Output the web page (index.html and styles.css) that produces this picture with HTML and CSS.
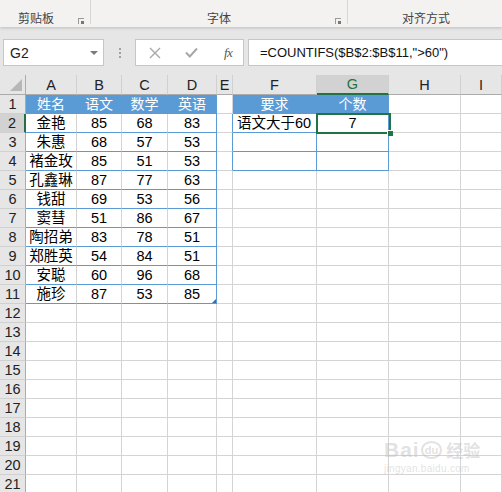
FILE: index.html
```html
<!DOCTYPE html>
<html lang="zh-CN">
<head>
<meta charset="utf-8">
<title>COUNTIFS</title>
<link rel="stylesheet" href="styles.css">
</head>
<body>
<div class="ribbon">
  <div class="grp g1"><span class="lbl">剪贴板</span><i class="launch"></i></div>
  <div class="grp g2"><span class="lbl">字体</span><i class="launch"></i></div>
  <div class="grp g3"><span class="lbl">对齐方式</span></div>
</div>
<div class="fbar">
  <div class="namebox"><span>G2</span>
    <svg class="caret" width="8" height="4" viewBox="0 0 8 4"><path d="M0 0H8L4 4Z" fill="#7a7a7a"/></svg>
  </div>
  <div class="dots"><i></i><i></i><i></i></div>
  <div class="btns">
    <svg width="12" height="12" viewBox="0 0 12 12"><path d="M1 1L11 11M11 1L1 11" stroke="#a8a8a8" stroke-width="1.4"/></svg>
    <svg width="13" height="11" viewBox="0 0 13 11"><path d="M1 5.5L4.8 9.5L12 1.5" fill="none" stroke="#a8a8a8" stroke-width="2"/></svg>
    <span class="fx">fx</span>
  </div>
  <div class="formula">=COUNTIFS($B$2:$B$11,"&gt;60")</div>
</div>
<div class="sheet">
  <div class="cell ch corner"><svg width="12" height="12" viewBox="0 0 12 12"><path d="M12 0V12H0Z" fill="#b7b7b7"/></svg></div>
  <div class="cell ch">A</div><div class="cell ch">B</div><div class="cell ch">C</div><div class="cell ch">D</div><div class="cell ch">E</div><div class="cell ch">F</div><div class="cell ch csel">G</div><div class="cell ch">H</div><div class="cell ch">I</div>

  <div class="cell rh">1</div><div class="cell hd">姓名</div><div class="cell hd">语文</div><div class="cell hd">数学</div><div class="cell hd">英语</div><div class="cell"></div><div class="cell hd">要求</div><div class="cell hd">个数</div><div class="cell"></div><div class="cell"></div>

  <div class="cell rh rsel">2</div><div class="cell t">金艳</div><div class="cell t">85</div><div class="cell t">68</div><div class="cell t br">83</div><div class="cell br"></div><div class="cell t br left">语文大于60</div><div class="cell t br">7</div><div class="cell"></div><div class="cell"></div>

  <div class="cell rh">3</div><div class="cell t">朱惠</div><div class="cell t">68</div><div class="cell t">57</div><div class="cell t br">53</div><div class="cell br"></div><div class="cell t br"></div><div class="cell t br"></div><div class="cell"></div><div class="cell"></div>

  <div class="cell rh">4</div><div class="cell t">褚金玫</div><div class="cell t">85</div><div class="cell t">51</div><div class="cell t br">53</div><div class="cell br"></div><div class="cell t br"></div><div class="cell t br"></div><div class="cell"></div><div class="cell"></div>

  <div class="cell rh">5</div><div class="cell t">孔鑫琳</div><div class="cell t">87</div><div class="cell t">77</div><div class="cell t br">63</div><div class="cell"></div><div class="cell"></div><div class="cell"></div><div class="cell"></div><div class="cell"></div>

  <div class="cell rh">6</div><div class="cell t">钱甜</div><div class="cell t">69</div><div class="cell t">53</div><div class="cell t br">56</div><div class="cell"></div><div class="cell"></div><div class="cell"></div><div class="cell"></div><div class="cell"></div>

  <div class="cell rh">7</div><div class="cell t">窦彗</div><div class="cell t">51</div><div class="cell t">86</div><div class="cell t br">67</div><div class="cell"></div><div class="cell"></div><div class="cell"></div><div class="cell"></div><div class="cell"></div>

  <div class="cell rh">8</div><div class="cell t">陶招弟</div><div class="cell t">83</div><div class="cell t">78</div><div class="cell t br">51</div><div class="cell"></div><div class="cell"></div><div class="cell"></div><div class="cell"></div><div class="cell"></div>

  <div class="cell rh">9</div><div class="cell t">郑胜英</div><div class="cell t">54</div><div class="cell t">84</div><div class="cell t br">51</div><div class="cell"></div><div class="cell"></div><div class="cell"></div><div class="cell"></div><div class="cell"></div>

  <div class="cell rh">10</div><div class="cell t">安聪</div><div class="cell t">60</div><div class="cell t">96</div><div class="cell t br">68</div><div class="cell"></div><div class="cell"></div><div class="cell"></div><div class="cell"></div><div class="cell"></div>

  <div class="cell rh">11</div><div class="cell t">施珍</div><div class="cell t">87</div><div class="cell t">53</div><div class="cell t br tend">85</div><div class="cell"></div><div class="cell"></div><div class="cell"></div><div class="cell"></div><div class="cell"></div>

  <div class="cell rh">12</div><div class="cell"></div><div class="cell"></div><div class="cell"></div><div class="cell"></div><div class="cell"></div><div class="cell"></div><div class="cell"></div><div class="cell"></div><div class="cell"></div>
  <div class="cell rh">13</div><div class="cell"></div><div class="cell"></div><div class="cell"></div><div class="cell"></div><div class="cell"></div><div class="cell"></div><div class="cell"></div><div class="cell"></div><div class="cell"></div>
  <div class="cell rh">14</div><div class="cell"></div><div class="cell"></div><div class="cell"></div><div class="cell"></div><div class="cell"></div><div class="cell"></div><div class="cell"></div><div class="cell"></div><div class="cell"></div>
  <div class="cell rh">15</div><div class="cell"></div><div class="cell"></div><div class="cell"></div><div class="cell"></div><div class="cell"></div><div class="cell"></div><div class="cell"></div><div class="cell"></div><div class="cell"></div>
  <div class="cell rh">16</div><div class="cell"></div><div class="cell"></div><div class="cell"></div><div class="cell"></div><div class="cell"></div><div class="cell"></div><div class="cell"></div><div class="cell"></div><div class="cell"></div>
  <div class="cell rh">17</div><div class="cell"></div><div class="cell"></div><div class="cell"></div><div class="cell"></div><div class="cell"></div><div class="cell"></div><div class="cell"></div><div class="cell"></div><div class="cell"></div>
  <div class="cell rh">18</div><div class="cell"></div><div class="cell"></div><div class="cell"></div><div class="cell"></div><div class="cell"></div><div class="cell"></div><div class="cell"></div><div class="cell"></div><div class="cell"></div>
  <div class="cell rh">19</div><div class="cell"></div><div class="cell"></div><div class="cell"></div><div class="cell"></div><div class="cell"></div><div class="cell"></div><div class="cell"></div><div class="cell"></div><div class="cell"></div>
  <div class="cell rh">20</div><div class="cell"></div><div class="cell"></div><div class="cell"></div><div class="cell"></div><div class="cell"></div><div class="cell"></div><div class="cell"></div><div class="cell"></div><div class="cell"></div>
  <div class="cell rh">21</div><div class="cell"></div><div class="cell"></div><div class="cell"></div><div class="cell"></div><div class="cell"></div><div class="cell"></div><div class="cell"></div><div class="cell"></div><div class="cell"></div>

  <div class="selbox"></div>
  <div class="watermark"><span class="wm-b">Bai</span><span class="wm-paw">du</span><span class="wm-j">经验</span><span class="wm-url">jingyan.baidu.com</span></div>
</div>
</body>
</html>
```

FILE: styles.css
```css
html, body {
  margin: 0;
  padding: 0;
  background: #e6e6e6;
  width: 502px;
  height: 492px;
  overflow: hidden;
}

.ribbon {
  height: 27px;
  background: #f3f2f1;
  display: flex;
  box-shadow: 0 1px 3px rgba(0, 0, 0, 0.18);
  position: relative;
  z-index: 1;
  font: 12px "Noto Sans CJK SC", "Liberation Sans", sans-serif;
  color: #444;
}
.grp {
  position: relative;
  box-sizing: border-box;
  height: 24px;
  display: flex;
  align-items: flex-end;
  align-self: flex-start;
}
.grp .lbl { line-height: 16px; margin-bottom: -2px; }
.g1 { width: 91px; padding-left: 18px; border-right: 1px solid #d6d6d6; }
.g2 { width: 257px; justify-content: center; border-right: 1px solid #d6d6d6; }
.g3 { flex: 1; padding-left: 54px; }
.launch {
  position: absolute;
  right: 6px;
  bottom: 0;
  width: 5px;
  height: 5px;
  border-left: 1px solid #9a9a9a;
  border-top: 1px solid #9a9a9a;
}
.launch::after {
  content: "";
  position: absolute;
  right: 0;
  bottom: 0;
  width: 3px;
  height: 3px;
  background: #777;
}

.fbar {
  height: 48px;
  box-sizing: border-box;
  padding-top: 12px;
  display: flex;
  align-items: flex-start;
  background: #e6e6e6;
}
.namebox {
  margin-left: 3px;
  width: 101px;
  height: 27px;
  box-sizing: border-box;
  background: #fff;
  border: 1px solid #c6c6c6;
  display: flex;
  align-items: center;
  justify-content: space-between;
  padding: 0 5px 0 6px;
  font: 14px "Liberation Sans", sans-serif;
  color: #222;
}
.caret { margin-top: 1px; }
.dots {
  width: 31px;
  height: 27px;
  display: flex;
  flex-direction: column;
  align-items: center;
  justify-content: center;
  gap: 2px;
}
.dots i {
  width: 2px;
  height: 2px;
  background: #a0a0a0;
}
.btns {
  width: 109px;
  height: 27px;
  box-sizing: border-box;
  background: #fff;
  border: 1px solid #c6c6c6;
  display: flex;
  align-items: center;
  padding-left: 13px;
  gap: 24px;
}
.fx {
  font: italic 13px "Liberation Serif", serif;
  color: #555;
  letter-spacing: -0.5px;
  margin-left: 2px;
}
.formula {
  margin-left: 4px;
  flex: 1;
  height: 27px;
  box-sizing: border-box;
  background: #fff;
  border: 1px solid #c6c6c6;
  border-right: 0;
  padding-left: 11px;
  font: 13px "Liberation Sans", sans-serif;
  color: #111;
  line-height: 25px;
  white-space: nowrap;
}

.sheet {
  position: relative;
  display: grid;
  grid-template-columns: 26px 51px 45px 46px 49px 16px 84px 72px 72px 41px;
  grid-template-rows: 20px;
  grid-auto-rows: 19px;
  height: 417px;
  overflow: hidden;
  background: #fff;
}
.cell {
  box-sizing: border-box;
  border-right: 1px solid #d4d4d4;
  border-bottom: 1px solid #d4d4d4;
  padding-top: 1px;
  display: flex;
  align-items: center;
  justify-content: center;
  font: 14.5px/17px "Liberation Sans", "Noto Sans CJK SC", sans-serif;
  color: #000;
  white-space: nowrap;
  position: relative;
}
.ch {
  background: #e6e6e6;
  border-bottom-color: #ababab;
  border-right-color: #d0d0d0;
  color: #222;
  padding-top: 1px;
}
.corner {
  align-items: flex-end;
  justify-content: flex-end;
  padding: 0 3px 3px 0;
  border-right-color: #ababab;
}
.csel {
  background: #d2d2d2;
  border-bottom: 2px solid #217346;
  color: #217346;
}
.rh {
  background: #e6e6e6;
  border-right-color: #ababab;
  border-bottom-color: #d0d0d0;
  color: #222;
}
.rsel {
  background: #d2d2d2;
  border-right: 2px solid #217346;
}
.hd {
  background: #5b9bd5;
  color: #fff;
  border-right-color: #5b9bd5;
  border-bottom-color: #5b9bd5;
  font-size: 14px;
}
.t { border-bottom-color: #5b9bd5; }
.br { border-right-color: #5b9bd5; }
.left { justify-content: flex-start; padding-left: 4px; }
.tend::after {
  content: "";
  position: absolute;
  right: 0;
  bottom: 0;
  width: 0;
  height: 0;
  border-left: 4px solid transparent;
  border-bottom: 4px solid #2f6eb5;
}

.selbox {
  position: absolute;
  left: 316px;
  top: 38px;
  width: 75px;
  height: 21px;
  box-sizing: border-box;
  border: 2px solid #217346;
  pointer-events: none;
}
.selbox::after {
  content: "";
  position: absolute;
  right: -4px;
  bottom: -4px;
  width: 5px;
  height: 5px;
  background: #217346;
  border: 1px solid #fff;
  border-right: 0;
  border-bottom: 0;
}

.watermark {
  position: absolute;
  left: 384px;
  top: 362px;
  width: 100px;
  color: rgba(190, 190, 190, 0.45);
  font-family: "Liberation Sans", "Noto Sans CJK SC", sans-serif;
  pointer-events: none;
}
.wm-b { font-size: 21px; font-weight: bold; letter-spacing: 1px; }
.wm-paw {
  display: inline-block;
  font-size: 11px;
  font-weight: bold;
  border: 2px solid rgba(190, 190, 190, 0.45);
  border-radius: 50%;
  padding: 1px 2px;
  margin: 0 4px 0 1px;
  vertical-align: 3px;
}
.wm-j { font-size: 17px; font-weight: bold; }
.wm-url { display: block; font-size: 10px; margin-top: 1px; letter-spacing: 0.3px; }
```
